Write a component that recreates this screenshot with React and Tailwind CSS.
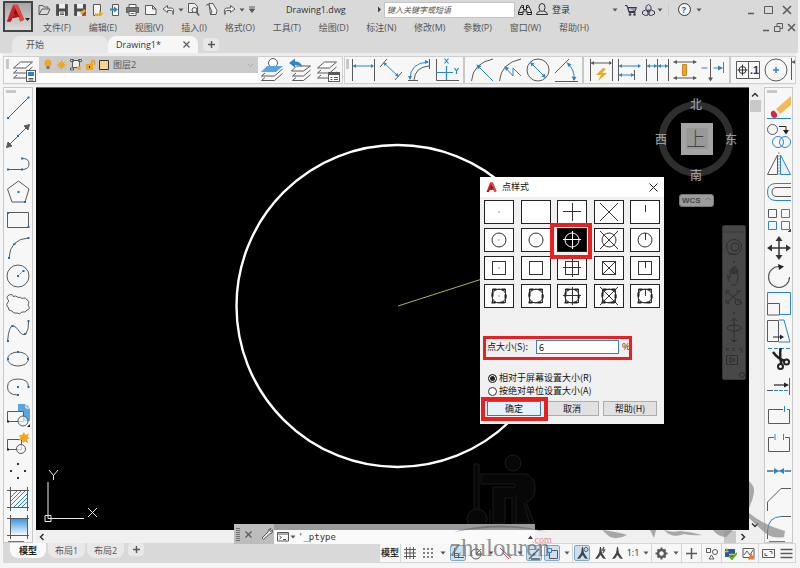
import React from "react";

const G = "#5a5a5a";
const B = "#2a86cb";

function Svg({ w = 24, h = 24, children, className = "" }) {
  return (
    <svg width={w} height={h} viewBox={`0 0 ${w} ${h}`} fill="none" stroke={G} strokeWidth="1" className={`shrink-0 ${className}`} aria-hidden="true">
      {children}
    </svg>
  );
}

function Dot({ x, y, c = "#1f6fb5" }) {
  return <rect x={x - 1} y={y - 1} width="2" height="2" fill={c} stroke="none" />;
}

function Caret({ className = "w-2", label = "展开" }) {
  return (
    <button aria-label={label} className={`flex h-full shrink-0 items-center justify-center ${className}`}>
      <Svg w={6} h={4}><path d="M0.5 0.5h5L3 3.5z" fill="#555" stroke="none" /></Svg>
    </button>
  );
}

function LogoA({ s }) {
  return (
    <svg width={s} height={s} viewBox="0 0 24 24" aria-hidden="true" className="shrink-0">
      <path d="M1 22 9 1h6l8 19-5 2-2-6-8 1-2 5z" fill="#c9262c" />
      <path d="M9 1h6l8 19-5 2L12 6z" fill="#e04a42" />
      <path d="M9.500 13 12 6l3 7z" fill="#7e1216" />
      <path d="M1 22 14 12l4 4-10 2-2 4z" fill="#a8171c" />
    </svg>
  );
}

/* ---------- quick access bar ---------- */
const quick = [
  ["打开", <Svg w={13} h={12}><path d="M1 10.500V1.500h4l1 1.500h4v2M1 10.500 4 5h8l-2.500 5.500z" /></Svg>],
  ["保存", <Svg w={12} h={12}><path d="M0.500 0.500h11v11h-11z" fill="#4b4b4b" /><path d="M3 0h6v4.500H3zM3 7.500h6V12H3z" fill="#eee" stroke="none" /><path d="M4 9h4M4 10.500h4" /></Svg>],
  ["另存为", <Svg w={12} h={12}><path d="M0.500 0.500h11v11h-11z" fill="#4b4b4b" /><path d="M3 0h6v4.500H3zM3 7.500h5V12H3z" fill="#eee" stroke="none" /><path d="m6 9 4-4 2 2-4 4z" fill="#f2a51f" stroke="none" /><path d="M8 12h4V9z" fill="#d9493c" stroke="none" /></Svg>],
  ["导入", <Svg w={12} h={12}><path d="M1.500 0.500h7v11h-7z" fill="#f5f5f5" /><path d="M3 9.500h4V6l4 4-2 2H3z" fill="#f2a51f" stroke="none" /></Svg>],
  ["导出", <Svg w={12} h={12}><path d="M3.500 0.500h6v11h-6z" fill="#f5f5f5" /><path d="M1 5.500h5" stroke={B} strokeWidth="2" /><path d="m5 2.500 4 3-4 3z" fill={B} stroke="none" /></Svg>],
  ["打印", <Svg w={13} h={12}><path d="M3 3.500v-3h7v3" fill="#fff" /><path d="M0.500 3.500h12v5h-12z" fill="#777" /><path d="M3 7.500h7v4H3z" fill="#fff" /><path d="M4.500 9.500h4" stroke={B} /></Svg>],
  ["新建", <Svg w={12} h={12}><path d="M0.500 1.500h7l3.500 3.500v5.500H0.500zM7.500 1.500v3.500H11" fill="#f5f5f5" /></Svg>],
  ["放弃", <Svg w={13} h={12}><path d="M5.500 1.500 1 5l4.500 3.500v-2h4q2 0 1.500 4 2-6.500-2-6.500H5.500z" fill="#f0f0f0" /></Svg>],
];
const quick2 = [
  ["预览", <Svg w={13} h={13}><path d="M1.500 9.500v-9h6l3 3v6z" fill="#eee" /><circle cx="7.500" cy="7" r="2.500" fill="#eee" /><path d="m9.500 9 2.500 3.500" strokeWidth="1.500" /></Svg>],
  ["图纸", <Svg w={13} h={13}><path d="M4 0.500h4l4 7-1 4H5.500z" fill="#f0f0f0" /><path d="M1 2.500 3.500 1 7 9l-1.500 2.500" /></Svg>],
  ["重做", <Svg w={13} h={12}><path d="M7.500 1.500 12 5 7.500 8.500v-2h-4q-2 0-1.500 4-2-6.500 2-6.500h3.500z" fill="#f0f0f0" /></Svg>],
];

const menus = ["文件(F)", "编辑(E)", "视图(V)", "插入(I)", "格式(O)", "工具(T)", "绘图(D)", "标注(N)", "修改(M)", "参数(P)", "窗口(W)", "帮助(H)"];

function Header() {
  return (
    <header className="mr-0.5 bg-[#d9d9d9] text-[9px] text-[#555]">
      <div className="flex h-9">
        <button aria-label="应用程序菜单" className="mt-px ml-[3px] flex h-[31px] w-[30px] shrink-0 items-start border-2 border-[#444] bg-linear-to-b from-[#a5a5a5] to-[#dcdcdc] p-px">
          <LogoA s={19} />
          <Svg w={5} h={24}><path d="M0 14h5l-2.500 3z" fill="#222" stroke="none" /></Svg>
        </button>
        <div className="flex min-w-0 flex-1 flex-col">
          <div className="ml-[3px] flex h-[19px] items-center">
            <div className="grid h-full w-[141px] shrink-0 grid-cols-8">
              {quick.map(([n, i]) => <button key={n} aria-label={n} className="flex items-center justify-center">{i}</button>)}
            </div>
            <Caret />
            <div className="grid h-full w-[53px] shrink-0 grid-cols-3">
              {quick2.map(([n, i]) => <button key={n} aria-label={n} className="flex items-center justify-center">{i}</button>)}
            </div>
            <Caret />
            <button aria-label="自定义" className="flex w-3 shrink-0 justify-center"><Svg w={6} h={7}><path d="M0 1h6M0.500 3h5L3 6.500z" fill="#555" /></Svg></button>
            <h1 className="ml-7 w-[88px] shrink-0 text-[#333]">Drawing1.dwg</h1>
            <Svg w={10} h={7}><path d="M4 0.500v6l3-3z" fill="#444" stroke="none" /></Svg>
            <input aria-label="搜索" placeholder="键入关键字或短语" className="h-4 w-[131px] min-w-0 border border-[#c4c4c4] bg-white px-0.5 text-[8px] italic placeholder:text-[#555]" />
            <button aria-label="查找" className="ml-0.5 flex w-[15px] justify-center">
              <Svg w={14} h={12}><path d="M3.500 1.500h2v4h3v-4h2l3 6.500v2.500h-4.500V7h-4v3.500H0.500V8z" stroke="#222" fill="#ddd" /><path d="M1 8.500h3.500M9.500 8.500H13M3.500 3.500h2M8.500 3.500h2" stroke="#222" /></Svg>
            </button>
            <button className="flex h-full w-[79px] shrink-0 items-center gap-1 pl-1 text-[#333]">
              <Svg w={12} h={13}><ellipse cx="6" cy="4.500" rx="3" ry="4" stroke="#333" /><path d="M4 8q-3.500 1-3.500 3.500h11Q11.500 9 8 8" stroke="#333" /></Svg>
              登录
            </button>
            <Caret />
            <button aria-label="购物车" className="ml-[3px] flex w-[18px] justify-center">
              <Svg w={12} h={12}><path d="M0 1.500h2l2 7h6.500M3 3.500h8.500l-1.500 4H4z" stroke="#37374d" fill="#8f8fa3" /><circle cx="5" cy="10.500" r="1" fill="#333" /><circle cx="9.500" cy="10.500" r="1" fill="#333" /></Svg>
            </button>
            <button aria-label="应用" className="flex w-4 justify-center">
              <Svg w={13} h={12}><path d="m6.500 0.500 2.500 2v3l-2.500 1.500L4 5.500v-3zM3.500 6 6 8v3l-2.500 0.500-3-1.500V7.500zM9.500 6 7 8v3l2.500 0.500 3-1.500V7.500z" stroke="#37374d" /><circle cx="6.500" cy="7" r="1" stroke="#37374d" /></Svg>
            </button>
            <Caret />
            <span className="mx-1 h-3 w-px bg-[#ccc]" />
            <button aria-label="帮助" className="flex w-[22px] justify-center">
              <span className="flex h-[13px] w-[13px] items-center justify-center rounded-full border border-[#333] bg-[#f4f4f4] font-bold text-[#2b62a0]">?</span>
            </button>
            <Caret />
            <div className="mr-0.5 ml-auto flex">
              <button aria-label="最小化" className="flex w-[18px] justify-center"><Svg w={8} h={10}><path d="M1 8.500h6" strokeWidth="1.500" /></Svg></button>
              <button aria-label="最大化" className="flex w-[18px] justify-center"><Svg w={10} h={10}><path d="M0.500 1.500h8v7h-8z" /></Svg></button>
              <button aria-label="关闭" className="flex w-[18px] justify-center"><Svg w={10} h={10}><path d="m1 1 8 8M9 1 1 9" strokeWidth="1.500" /></Svg></button>
            </div>
          </div>
          <nav className="flex h-[17px] items-center pl-[10px]">
            <div className="flex w-[546px] justify-between whitespace-nowrap">
              {menus.map((m) => <button key={m}>{m}</button>)}
            </div>
            <div className="mr-0.5 ml-auto flex gap-1">
              <button aria-label="最小化图形"><Svg w={7} h={9}><path d="M0 7.500h6" strokeWidth="1.500" /></Svg></button>
              <button aria-label="还原图形"><Svg w={9} h={9}><path d="M3 3V0.500h5.500v5H6M0.500 3.500h5.500v5H0.500z" /></Svg></button>
              <button aria-label="关闭图形"><Svg w={9} h={9}><path d="m1 1 7 7M8 1 1 8" strokeWidth="1.500" /></Svg></button>
            </div>
          </nav>
        </div>
      </div>
      <div className="flex h-[17px] items-center pl-3">
        <button className="h-full w-24 rounded-t-lg bg-[#e8e8e8] pl-[14px] text-left">开始</button>
        <div className="flex h-full w-[90px] items-center justify-between rounded-t-lg bg-[#f7f7f7] pr-2 pl-2 text-[#333]">
          <button>Drawing1*</button>
          <button aria-label="关闭标签"><Svg w={7} h={7}><path d="m0.500 0.500 6 6M6.500 0.500l-6 6" strokeWidth="1.200" /></Svg></button>
        </div>
        <button aria-label="新图形" className="ml-[5px] flex h-[13px] w-4 items-center justify-center rounded bg-[#e8e8e8]"><Svg w={7} h={7}><path d="M0 3.500h7M3.500 0v7" strokeWidth="1.500" /></Svg></button>
      </div>
    </header>
  );
}

/* ---------- layer and dimension bar ---------- */
const sheets = <><path d="m1.500 10 7-6h12l-7 6z" fill="#fff" /><path d="m5 12-3.500 3h12l7-6M5 17l-3.500 3h12l7-6" /></>;

const dims1 = [
  ["线性", <Svg><path d="M1.500 1v22M23.500 1v22" /><path d="M2 8h20" stroke={B} /><path d="m2 8 3-2v4zM23 8l-3-2v4z" fill={B} stroke="none" /></Svg>],
  ["对齐", <Svg><path d="m1 9 7-8M16 22l7-8" /><path d="m5 5 14 13" stroke={B} /><path d="m4 4 4 1.500-2.500 2.500zM20 19l-4-1.500 2.500-2.500z" fill={B} stroke="none" /></Svg>],
  ["弧长", <Svg><path d="M1 22.500h10M22.500 1v10M7 22Q8 9 22 8" /><path d="M3 21Q3 5 21 4" stroke={B} /><path d="m3 22-2-4h4zM22 4l-4-2v4z" fill={B} stroke="none" /></Svg>],
  ["坐标", <Svg><path d="M1.500 1v21.500H24" /><path d="M1 14.500h17M11.500 8v14M9.500 0.500l4 5M13.500 0.500l-4 5M19.500 10l2 3 2-3M21.500 13v3" stroke={B} strokeWidth="1.200" /></Svg>],
];
const dims2 = [
  ["半径", <Svg><path d="M1.500 23Q3 5 23 1" /><path d="m8 8 15 15" stroke={B} /><path d="m6.500 6.500 5 1.500-3.500 3.500z" fill={B} stroke="none" /></Svg>],
  ["折弯", <Svg><path d="M1.500 23Q3 5 23 1" /><path d="m7 9 8 9v-8l8 8" stroke={B} /><path d="m6.500 8 4.500 2-3 3z" fill={B} stroke="none" /></Svg>],
  ["直径", <Svg><circle cx="12" cy="12" r="11" /><path d="m5 5 14 14" stroke={B} /><path d="m4 4 4.500 1.500-3 3zM20 20l-4.500-1.500 3-3z" fill={B} stroke="none" /></Svg>],
  ["角度", <Svg><path d="M1 15 15 1M1 23.500h23" /><path d="M14 6q7 6 6 16" stroke={B} /><path d="m12.500 4 5 2.500-3 2.500zM20 23l-2.500-4.500 5 0.500z" fill={B} stroke="none" /></Svg>],
];
const dims3 = [
  ["快速标注", <Svg><path d="M1.500 1v22M23.500 1v22M2 5h20" /><path d="m2 5 3-2v4zM23 5l-3-2v4z" fill={G} stroke="none" /><path d="m14 10-7 7h5l-3 6 9-8h-5l4-4z" fill="#f2a51f" stroke="none" /></Svg>],
  ["基线", <Svg><path d="M1.500 1v22M17.500 12v10" /><path d="M2 8h20M2 17h15" stroke={B} /><path d="m2 8 3-2v4zM24 8l-3-2v4zM2 17l3-2v4zM17 17l-3-2v4z" fill={B} stroke="none" /></Svg>],
  ["连续", <Svg><path d="M1.500 1v22M12.500 1v22M23.500 1v22" /><path d="M2 8h21" stroke={B} /><path d="m2 8 3-2v4zM12 8 9 6v4zM13 8l3-2v4zM23 8l-3-2v4z" fill={B} stroke="none" /></Svg>],
  ["等距标注", <Svg><path d="M1 4h22M1 20h22" /><path d="m0 4 4-2v4zM24 4l-4-2v4zM0 20l4-2v4zM24 20l-4-2v4z" fill={G} stroke="none" /><path d="M9.500 6.500h4v11h-4z" fill="#f2a51f" stroke="#c9891c" /></Svg>],
  ["折断", <Svg><path d="M9.500 1v20" /><path d="M0.500 10h6M12.500 10h8" stroke={B} strokeWidth="1.200" /><path d="m22 10-5-2.500v5zM22.500 4" fill={B} stroke="none" /><path d="M22.500 4v11" stroke={B} /><path d="m9.500 23.500-2.500-4h5z" fill={G} stroke="none" /></Svg>],
];
const dims4 = [
  ["公差", <Svg><path d="M0.500 3.500h23v17h-23zM12.500 3.500v17" /><circle cx="6.500" cy="12" r="3.500" stroke="#333" /><path d="M1.500 12h10M6.500 6.500v11" stroke="#333" /><text x="14" y="16" fontSize="11" fontWeight="bold" fill="#333" stroke="none" fontFamily="Liberation Sans">.1</text></Svg>],
  ["圆心标记", <Svg><circle cx="12" cy="12" r="11" /><path d="M9 12h6M12 9v6" stroke={B} strokeWidth="1.500" /></Svg>],
];

function Tool({ item, className = "w-7" }) {
  return <button aria-label={item[0]} className={`flex shrink-0 items-center justify-center ${className}`}>{item[1]}</button>;
}
const Sep = () => <span className="mr-[3px] ml-0.5 w-0.5 shrink-0 bg-[#c8c8c8]" />;
const Grip = () => <span className="mt-0.5 h-2.5 w-[3px] shrink-0 bg-[#c8c8c8]" />;

function RibbonBar() {
  return (
    <div className="mr-1 ml-[3px] flex h-8 shrink-0 overflow-hidden border-t-[3px] border-b border-[#ececec] bg-[#f7f7f7]">
      <div className="flex shrink-0 border border-[#cfcfcf] pl-0.5">
        <Grip />
        <Tool className="w-[30px]" item={["图层特性", <Svg>{sheets}<rect x="14.500" y="12.500" width="9" height="11" fill="#fff" /><path d="M16 14h6v4h-6z" fill={B} stroke="none" /><path d="M16.500 20.500h5M16.500 22h5" /></Svg>]} />
        <div className="w-[219px] bg-white">
          <button className="flex h-4 w-full items-center gap-[3px] bg-[#cbcbcb] px-1 text-[9px] text-[#555]">
            <Svg w={10} h={12}><circle cx="5" cy="4" r="3.500" fill="#f2a51f" stroke="none" /><path d="M3.500 7h3v3h-3z" fill="#777" stroke="none" /></Svg>
            <Svg w={11} h={12}><circle cx="5.500" cy="6" r="3" fill="#f2a51f" stroke="none" /><path d="M5.500 1v10M0.500 6h10M2 2.500l7 7M9 2.500l-7 7" stroke="#f2a51f" /></Svg>
            <Svg w={12} h={12}><path d="M2.500 1.500h7v7h-7zM0.500 0.500h3v2h-3zM8.500 0.500h3v2h-3zM0.500 9h3v2h-3z" fill="#eee" /><circle cx="9" cy="9" r="2" fill="#f2a51f" stroke="none" /></Svg>
            <Svg w={11} h={12}><path d="M6.500 5V2.500q1.500-2 3 0V6" stroke="#e89b1c" strokeWidth="1.500" /><path d="M1 5h7v6H1z" fill="#f2a51f" stroke="none" /><path d="M4.500 7v2" stroke="#333" /></Svg>
            <Svg w={11} h={12}><path d="M0.500 1.500h9v9h-9z" fill="#f6d48a" stroke="#333" /></Svg>
            <span className="flex-1 text-left">图层2</span>
            <Svg w={7} h={5}><path d="m1 1 2.500 2.500L6 1" stroke="#aaa" /></Svg>
          </button>
        </div>
        <Tool item={["置为当前", <Svg><circle cx="13" cy="5" r="4.500" fill="#fff" /><path d="m1 14 6-6h16l-7 6z" fill="#5ba6e0" stroke="none" /><path d="m5 15-3.500 3h13l8-7M5 19.500l-3.500 3h13l8-7" /></Svg>]} />
        <Tool item={["上一图层", <Svg><path d="m4.500 12 4-4h14l-7 5h-12zM8 15l-3.500 3h11l7-6M8 19.500l-3.500 3h11l7-6" /><path d="M1 5 7 0.500v3q6 0 7 5-3-2-7-1.500V9.500z" fill={B} stroke="none" /></Svg>]} />
        <Tool item={["图层状态", <Svg>{sheets}<rect x="12.500" y="14.500" width="11" height="9" fill="#fff" /><path d="M13 16h10" strokeWidth="2" /><path d="M14.500 19.500h2M18 19.500h4M14.500 21.500h2M18 21.500h4" /></Svg>]} />
      </div>
      <div className="ml-px flex min-w-0 flex-1 overflow-hidden border border-[#cfcfcf] pl-px">
        <Grip />
        {dims1.map((d) => <Tool key={d[0]} item={d} />)}
        <Sep />
        {dims2.map((d) => <Tool key={d[0]} item={d} />)}
        <Sep />
        {dims3.map((d) => <Tool key={d[0]} item={d} />)}
        <Sep />
        {dims4.map((d) => <Tool key={d[0]} item={d} />)}
        <Svg w={8}><path d="M1.500 1v22M2 5h6" /><path d="m2 5 3-2v4z" fill={G} stroke="none" /></Svg>
      </div>
    </div>
  );
}

/* ---------- side bars ---------- */
const drawTools = [
  ["直线", <Svg><path d="M2 22 23 1" /><Dot x={2} y={22} /><Dot x={22.500} y={1.500} /></Svg>],
  ["构造线", <Svg><path d="M3 21 21 3" /><path d="m0.500 23.500 1.500-5.500 4 4zM23.500 0.500l-5.500 1.500 4 4z" fill={G} /><Dot x={12} y={12} /></Svg>],
  ["多段线", <Svg><path d="M2 17.500h14q7 0 7-5.500t-6-5.500" /><Dot x={2} y={17.500} /><Dot x={16} y={17.500} /><Dot x={16} y={6.500} /></Svg>],
  ["多边形", <Svg><path d="m12.500 1 10.500 8-4 13H6L1.500 9z" /><Dot x={12.500} y={12} /><Dot x={19} y={22} /></Svg>],
  ["矩形", <Svg><path d="M1.500 4.500h21v15h-21z" /><Dot x={2} y={5} /><Dot x={22.500} y={19} /></Svg>],
  ["圆弧", <Svg><path d="M3 22Q4 3 22.500 2" /><Dot x={3} y={22} /><Dot x={8.500} y={8} /><Dot x={22.500} y={2} /></Svg>],
  ["圆", <Svg><circle cx="12" cy="12" r="11" /><path d="m12 12 5-5" stroke={B} strokeDasharray="2 1" /><Dot x={12} y={12} /><Dot x={17.500} y={7} /></Svg>],
  ["修订云线", <Svg><path d="M3 9q-4-4 0-6 4-1.500 4 1.500 3-1.500 5 1 3-1 4 1 4-1.500 5 1.500 3 1 1 5 3 4-1 5-1 3-5 2-2 3-5 1-4 1-5-2-4 0-4-4-3-2 1-6z" /></Svg>],
  ["样条曲线", <Svg><path d="M1.500 22.500Q3 6 7 7q3 0 6 5t7 3q3-5 2.500-13" /><Dot x={2} y={22} /><Dot x={6.500} y={7} /><Dot x={19} y={15} /><Dot x={22.500} y={2} /></Svg>],
  ["椭圆", <Svg><ellipse cx="12" cy="12" rx="10.500" ry="7" /><Dot x={12} y={5} /><Dot x={2} y={12} /><Dot x={22} y={12} /></Svg>],
  ["椭圆弧", <Svg><path d="M12 20Q1.500 20 1.500 12T12 4t10.500 8" /><Dot x={12} y={20} /><Dot x={12} y={12} /><Dot x={22.500} y={12} /></Svg>],
  ["插入块", <Svg><path d="M12 1h8l4 4v13H12z" fill="#5ba6e0" stroke="none" /><path d="M20 1v4h4" stroke="#fff" /><path d="M1.500 8.500h16v10h-16z" fill="#f7f7f7" /><circle cx="17" cy="18" r="5" fill="#f7f7f7" fillOpacity="0.700" /><path d="M24 21v3h-3z" fill="#222" stroke="none" /><Dot x={2} y={18.500} c="#222" /></Svg>],
  ["创建块", <Svg><path d="M1.500 8.500h14v10h-14z" /><circle cx="15" cy="18" r="4.500" fill="#f7f7f7" fillOpacity="0.700" /><path d="m18 1 1.500 3 3.500-1.500L21.500 6l2.500 1-3 1.500 1 3.500-3-1.500L17 12l-1-3-3.500 0.500 2-3-2-2 3.500-0.500z" fill="#f2a51f" stroke="none" /><Dot x={2} y={18.500} c="#222" /></Svg>],
  ["点", <Svg><Dot x={12} y={5} c="#333" /><Dot x={5} y={12} c="#333" /><Dot x={19} y={12} c="#333" /><Dot x={12} y={19} c="#333" /></Svg>],
  ["图案填充", <Svg><path d="m5 10 6-6M5 14 15 4M5 18 19 4M8 20 21 7M12 20l9-9M16 20l5-5" stroke={B} /><path d="M1 3.500h22M1 20.500h22M4.500 0v24M21.500 0v24" /></Svg>],
  ["渐变色", <Svg><defs><linearGradient id="fade" x1="0" y1="0" x2="0" y2="1"><stop offset="0" stopColor="#3d98e0" /><stop offset="1" stopColor="#f4f9ff" /></linearGradient></defs><path d="M5 4h16v16H5z" fill="url(#fade)" stroke="none" /><path d="M1 3.500h22M1 20.500h22M4.500 0v24M21.500 0v24" /></Svg>],
];

const editTools = [
  ["删除", <Svg><path d="M24 0v9L13 18l-4-5z" fill="#f3bb55" stroke="none" /><path d="m9 13 4 5-1.500 1-4-5z" fill="#eee" stroke="none" /><path d="M4 16q3-4 6 2 1 4-3 4-4-1-3-6z" fill="#dc2540" stroke="none" /><path d="M0 22.500h24" stroke={B} /></Svg>],
  ["复制", <Svg><circle cx="5.500" cy="5.500" r="5" /><circle cx="11" cy="18" r="5.500" stroke={B} /><circle cx="18" cy="18" r="5.500" stroke={B} /><path d="M12 2.500h7V7" stroke="#222" /><path d="M16 6h6l-3 4.500z" fill="#222" stroke="none" /></Svg>],
  ["镜像", <Svg><path d="M0.500 22.500 10.500 3v19.500z" /><path d="M13.500 3v19.500h10z" stroke={B} fill="#e4f0fa" /><path d="M12 0v24" strokeDasharray="2 1" stroke="#999" /></Svg>],
  ["偏移", <Svg><path d="M24 3.500H9q-8.500 0-8.500 8.500T9 20.500h15" stroke={B} /><path d="M24 7.500H10q-5 0-5 4.500t5 4.500h14" /></Svg>],
  ["阵列", <Svg><path d="M1.500 1.500h8v8h-8z" /><path d="M14.500 1.500h8v8h-8zM1.500 13.500h8v8h-8zM14.500 13.500h8v8h-8z" stroke={B} /><path d="M24 21v3h-3z" fill="#222" /></Svg>],
  ["移动", <Svg><path d="M12 4v16M4 12h16" stroke="#333" strokeWidth="1.500" /><path d="m12 0 3.500 5h-7zM12 24l3.500-5h-7zM0 12l5-3.500v7zM24 12l-5-3.500v7z" fill="#333" stroke="none" /></Svg>],
  ["旋转", <Svg><path d="M12 2.500A10.500 10.500 0 1 0 22.500 13" strokeWidth="1.200" /><path d="m11 0 6 2.500-5 3.500z" fill="#222" stroke="none" /></Svg>],
  ["缩放", <Svg><path d="M0.500 0.500h23v22h-23z" stroke={B} /><path d="M0.500 11.500h12v11.500h-12z" fill="#f7f7f7" /></Svg>],
  ["拉伸", <Svg><path d="M12 1h5l6 22H12" stroke={B} /><path d="M0.500 1.500h11v21H0.500z" /><path d="M6 18h8" stroke="#222" /><path d="m17 18-4-2.500v5z" fill="#222" stroke="none" /></Svg>],
  ["修剪", <Svg><path d="M1 1.500h22" stroke={B} strokeDasharray="4 2" /><path d="M6 5q5 7 12 9M13.500 1q-1 10 1 16" stroke="#222" strokeWidth="2.500" /><circle cx="19.500" cy="15" r="2.500" stroke="#222" strokeWidth="2" /><circle cx="13.500" cy="19.500" r="2.500" stroke="#222" strokeWidth="2" /></Svg>],
  ["延伸", <Svg><path d="M22.500 3v17" /><path d="M7 10h12" stroke="#222" strokeWidth="1.200" /><path d="m22 10-5-2.500v5z" fill="#222" stroke="none" /><path d="M0 15.500h6" /><path d="M7 15.500h15" stroke={B} strokeDasharray="4 1" /></Svg>],
  ["打断于点", <Svg><path d="M16 6.500H1.500v14h21v-14H20" /><path d="M17.500 3v6" stroke={B} /></Svg>],
  ["打断", <Svg><path d="M7 6.500H1.500v14h21v-14H18" /><path d="M8 3v6M16.500 3v6" stroke={B} /></Svg>],
  ["合并", <Svg><path d="M0 12h24" stroke={B} /><path d="M0 12h6M18 12h6" /><path d="m12 12-5-3v6zM12 12l5-3v6z" fill={B} stroke="none" /></Svg>],
  ["倒角", <Svg><path d="M0.500 24v-9L14 1.500h10" /></Svg>],
  ["圆角", <Svg><path d="M14 1.500h10M0.500 24V15" /><path d="M0.500 16Q1 2 14 1.500" stroke={B} /></Svg>],
];

function SideBar({ tools, className }) {
  return (
    <div className={`flex shrink-0 flex-col border border-[#c8c8c8] bg-[#f7f7f7] ${className}`}>
      <span className="mt-0.5 ml-0.5 h-[3px] w-2.5 shrink-0 bg-[#c8c8c8]" />
      <div className="mt-px flex min-h-0 flex-1 flex-col">
        {tools.map((t) => (
          <button key={t[0]} aria-label={t[0]} className="flex min-h-0 flex-1 items-center justify-center">{t[1]}</button>
        ))}
      </div>
      <span className="ml-1 h-px w-4 bg-[#777]" />
    </div>
  );
}

/* ---------- point style dialog ---------- */
function PointMark({ row, col, dark }) {
  const c = dark ? "#fff" : "#333";
  return (
    <svg width="28" height="22" viewBox="0 0 28 22" fill="none" stroke={c} strokeWidth="1" aria-hidden="true">
      {(row === 1 || row === 3) && <circle cx="14" cy="11" r="7" />}
      {row >= 2 && <rect x="7.500" y="4.500" width="13" height="13" strokeWidth="1" />}
      {row === 3 && <rect x="7.500" y="4.500" width="13" height="13" strokeDasharray="4 5" strokeWidth="2" stroke="#222" />}
      {col === 0 && <rect x="13.500" y="10.500" width="1" height="1" fill={c} stroke="none" />}
      {col === 2 && <path d="M5 10.500h18M14.500 2v18" />}
      {col === 3 && <path d={row === 2 ? "M7 4l14 14M21 4 7 18" : "M5 2l18 18M23 2 5 20"} />}
      {col === 4 && <path d="M14.500 4v7" />}
    </svg>
  );
}

function PointDialog() {
  const btn = "h-[15px] w-[54px] border border-[#adadad] bg-[#e1e1e1]";
  return (
    <section role="dialog" aria-label="点样式" className="absolute top-[89px] left-[444px] flex h-[247px] w-[184px] flex-col bg-[#f0f0f0] font-['Noto_Sans_CJK_SC',sans-serif] text-[9px] leading-3 text-[#111]">
      <div className="flex h-5 items-center gap-[5px] bg-white px-[6px]">
        <LogoA s={11} />
        <h2 className="flex-1">点样式</h2>
        <button aria-label="关闭"><Svg w={9} h={9}><path d="m0.500 0.500 8 8M8.500 0.500l-8 8" stroke="#222" /></Svg></button>
      </div>
      <div className="mt-[3px] flex flex-col gap-1 px-1">
        {[0, 1, 2, 3].map((r) => (
          <div key={r} className="flex justify-between">
            {[0, 1, 2, 3, 4].map((c) => {
              const on = r === 1 && c === 2;
              return (
                <button key={c} aria-label={`样式 ${r * 5 + c + 1}`} className={`flex h-6 w-[30px] items-center justify-center border border-[#222] ${on ? "bg-black" : "bg-white"}`}>
                  <PointMark row={r} col={c} dark={on} />
                </button>
              );
            })}
          </div>
        ))}
      </div>
      <div className="mt-8 flex items-center px-[7px]">
        <label htmlFor="psize" className="w-[49px]">点大小(S):</label>
        <input id="psize" defaultValue="6" className="h-[14px] w-[83px] border border-[#3f7fc0] bg-white px-0.5" />
        <span className="ml-[3px]">%</span>
      </div>
      <div className="mt-[18px] flex flex-col gap-px pl-2">
        {["相对于屏幕设置大小(R)", "按绝对单位设置大小(A)"].map((t, i) => (
          <label key={t} className="flex items-center gap-0.5">
            <input type="radio" name="mode" defaultChecked={i === 0} className="h-[9px] w-[9px] appearance-none rounded-full border border-[#333] bg-white checked:bg-[#222] checked:shadow-[inset_0_0_0_1px_#fff]" />
            {t}
          </label>
        ))}
      </div>
      <div className="mt-1 flex gap-1 px-[7px]">
        <button className="h-[15px] w-[54px] border border-[#2a7fc9] bg-[#e5f1fb]">确定</button>
        <button className={btn}>取消</button>
        <button className={btn}>帮助(H)</button>
      </div>
      <span className="pointer-events-none absolute top-[46px] left-[70px] h-9 w-[42px] border-4 border-[#ea2020]" />
      <span className="pointer-events-none absolute top-[159px] left-[3px] h-6 w-[149px] border-[3px] border-[#ea2020]" />
      <span className="pointer-events-none absolute top-[220px] left-px h-6 w-[67px] border-4 border-[#ea2020]" />
    </section>
  );
}

/* ---------- drawing area ---------- */
function Canvas() {
  return (
    <div className="relative min-h-0 flex-1 bg-black font-['Noto_Sans_CJK_SC',sans-serif]">
      <svg width="713" height="442" viewBox="36 88 713 442" fill="none" className="absolute top-0 left-0" aria-hidden="true">
        <circle cx="397.500" cy="306" r="161" stroke="#fff" strokeWidth="2.400" />
        <path d="M398 306 482 279" stroke="#b3b04a" />
        <path d="M48 482v36.500h36M45 515.500h6v6h-6z" stroke="#e8e8e8" />
        <path d="m49 470 4.500 5.500 4.500-5.500M53.500 475v5M88 508l9 9M97 508l-9 9" stroke="#e8e8e8" />
        {/* view cube */}
        <circle cx="696" cy="139" r="34" stroke="#2e2e2e" strokeWidth="7" />
        <rect x="681" y="123" width="32" height="32" fill="#a4a4a4" />
        <rect x="686" y="128" width="22" height="21" fill="#989898" />
        <g fontSize="12" textAnchor="middle" fill="#9a9a9a" fontWeight="500" fontFamily="Noto Sans CJK SC, sans-serif">
          <text x="696" y="109">北</text>
          <text x="661" y="144">西</text>
          <text x="731" y="144">东</text>
          <text x="696" y="180">南</text>
          <text x="696" y="146" fontSize="19" fill="#444" fontWeight="300">上</text>
        </g>
        <rect x="679.500" y="194.500" width="34" height="12" rx="2.500" fill="#9c9c9c" stroke="#777" />
        <text x="682" y="203" fontSize="8" fill="#4a4a4a" fontWeight="bold" fontFamily="Liberation Sans, sans-serif">WCS</text>
        <path d="m705 200 3-2 3 2" stroke="#777" />
        {/* navigation bar */}
        <rect x="722.500" y="225.500" width="23" height="154" rx="1.500" fill="#484848" stroke="#363636" />
        <path d="M723 232h23" stroke="#363636" />
        <g stroke="#2e2e2e">
          <circle cx="734" cy="247" r="7.500" /><circle cx="735" cy="247" r="4" /><path d="M728 254h8" />
          <path d="M730 282q-3-5-3-7l3 3v-8q2-1 2 0v4-6q2-1 2 0v6-7q2-1 2 0v7l1-4q2 0 1 2v5q0 6-3 8h-4" />
          <path d="m726 291 16 13M726 303l14-12M726 295v-4h4M726 299v4h4M736 291h5" /><circle cx="738" cy="302" r="3" />
          <path d="M734 318v24M731 321l3-3 3 3M731 339l3 3 3-3" /><ellipse cx="734" cy="328" rx="7" ry="3" />
          <path d="M726.500 355.500h11v9h-11zM730 357.500v5l5-2.500zM726 348l3 3M729 348l-3 3M732 348l3 3M735 348l-3 3M739 349h3v4" /><circle cx="742" cy="375" r="2.500" />
        </g>
        <path d="M733 262h2M733 313h2M733 341h2" stroke="#222" />
        {/* studio mark */}
        <g stroke="#1d1b18" fill="#070707">
          <circle cx="513" cy="463" r="8" />
          <path d="M474 464h5v47h-5zM481 474h45q10 4 9 16-1 10-9 12l8 21h-22v-25h-7v25h-12v-36h22v-3h-34z" />
          <circle cx="477" cy="519" r="10" /><path d="M490 510v14M516 495v30M524 503l6 22" />
        </g>
      </svg>

      <div className="absolute top-[436px] left-[198px] z-10 flex h-5 w-[301px] flex-col">
        <div className="h-[6px] bg-[#9a9a9a]" />
        <div className="-mt-[6px] flex h-5 items-center text-[10px] text-[#333]">
          <div className="flex h-full w-10 items-center gap-[5px] bg-[#bdbdbd] px-0.5">
            <Svg w={4} h={13}><path d="M1 0v13M3 0v13" strokeDasharray="1 1" strokeWidth="1.500" /></Svg>
            <button aria-label="关闭命令行"><Svg w={7} h={7}><path d="m0.500 0.500 6 6M6.500 0.500l-6 6" strokeWidth="1.200" /></Svg></button>
            <button aria-label="自定义命令行" className="ml-1"><Svg w={12} h={12}><path d="m1 10 6-6q-0.500-3 3-3.500L8.500 2.500l1 1 2-1.500q0.500 4-3 4l-6 5.500z" fill="#e8e8e8" /></Svg></button>
          </div>
          <div className="mt-[6px] flex h-[14px] flex-1 items-center bg-[#fafafa] pl-[3px]">
            <Svg w={12} h={10}><path d="M0.500 0.500h11v8.500H0.500zM0.500 2h11M2.500 4l2 1.500-2 1.500M6 7.500h3" /></Svg>
            <Caret />
            <input aria-label="命令" defaultValue="'_ptype" className="h-[14px] min-w-0 flex-1 bg-transparent px-px font-['DejaVu_Sans_Mono',monospace] text-[9px]" />
            <Svg w={9} h={5}><path d="M2 4h5L4.500 0.500z" fill="#444" stroke="none" /></Svg>
          </div>
        </div>
      </div>
      <PointDialog />
    </div>
  );
}

/* ---------- status bar ---------- */
const on = "mx-px rounded-xs border border-[#7fa8cc] bg-[#cbe1f3] w-4";
const annot = <path d="M7 1h1l1 6 4 6-3-0.500L7.500 9 5 12.500 2 13l4-6z" fill="#444" stroke="none" />;

function StatusBar() {
  const st = (label, cls, icon) => <button aria-label={label} className={`flex h-4 shrink-0 items-center justify-center ${cls}`}>{icon}</button>;
  const group = "flex h-full items-center border-r border-[#d5d5d5]";
  return (
    <footer className="mr-1 ml-[3px] flex h-5 shrink-0 bg-[#d9d9d9] text-[9px] text-[#555]">
      <div className="flex h-[15px] pl-[7px]">
        <button className="w-9 rounded-b-lg bg-[#fafafa] font-bold text-[#222]">模型</button>
        <button className="ml-0.5 w-[37px] rounded-b-lg bg-[#e8e8e8]">布局1</button>
        <button className="ml-0.5 w-[37px] rounded-b-lg bg-[#e8e8e8]">布局2</button>
        <button aria-label="新布局" className="ml-1 flex h-[13px] w-4 items-center justify-center rounded bg-[#e8e8e8]"><Svg w={7} h={7}><path d="M0 3.500h7M3.500 0v7" strokeWidth="1.500" /></Svg></button>
      </div>
      <div className="ml-auto flex shrink-0 items-center border border-[#d5d5d5] bg-[#f7f7f7]">
        <div className={group}><button className="w-[20px] font-bold whitespace-nowrap text-[#333]">模型</button></div>
        <div className={group}>
          {st("栅格", "w-[18px]", <Svg w={12} h={12}><path d="M0 2.500h12M0 6h12M0 9.500h12M2.500 0v12M6 0v12M9.500 0v12" /></Svg>)}
          {st("捕捉", "w-[18px]", <Svg w={12} h={12}><path d="M1 2h10M1 6h10M1 10h10" strokeDasharray="2 2" strokeWidth="1.500" /></Svg>)}
          <Caret className="w-3" />
          {st("正交", on, <Svg w={13} h={13}><path d="M2.500 1v9.500H12M2.500 6.500h4v4" /></Svg>)}
          {st("极轴", "w-[18px]", <Svg w={13} h={13}><circle cx="6" cy="7" r="5" /><path d="M6 7h6M6 7l5-5" /></Svg>)}
          <Caret className="w-[11px]" />
          {st("等轴测", "w-[18px]", <Svg w={13} h={13}><path d="m1 1 11 10" /><path d="m4 6 6 6" stroke="#d4504c" /></Svg>)}
          <Caret className="w-[11px]" />
          {st("对象追踪", on, <Svg w={13} h={13}><path d="M1 12 11 2M3 12h9" strokeWidth="1.300" /><Dot x={6} y={7} /></Svg>)}
          {st("对象捕捉", on, <Svg w={13} h={13}><path d="M3.500 3.500h8v8h-8z" /><path d="M1.500 1.500h4v4h-4z" stroke={B} fill="#cbe1f3" /></Svg>)}
          <Caret className="w-[11px]" />
        </div>
        <div className={group}>
          {st("注释可见性", on, <Svg w={14} h={14}>{annot}<circle cx="11" cy="3.500" r="2" /></Svg>)}
          {st("自动缩放", "w-[17px]", <Svg w={14} h={14}>{annot}<path d="m11 1-1.500 3h2L10 7" strokeWidth="1.500" /></Svg>)}
          {st("注释", "w-[17px]", <Svg w={14} h={14}>{annot}</Svg>)}
          <button className="w-4 text-[#222]">1:1</button>
          <Caret className="w-[10px]" />
        </div>
        <div className={group}>
          {st("切换工作空间", "w-[18px]", <Svg w={13} h={13}><circle cx="6.500" cy="6.500" r="3.500" strokeWidth="2.500" /><path d="M6.500 0.500v3M6.500 9.500v3M0.500 6.500h3M9.500 6.500h3M2.500 2.500l2 2M8.500 8.500l2 2M10.500 2.500l-2 2M4.500 8.500l-2 2" strokeWidth="2" /></Svg>)}
          <Caret className="w-[11px]" />
        </div>
        <div className={group}>{st("注释监视器", "w-[19px]", <Svg w={13} h={13}><path d="M6.500 1v11M1 6.500h11" strokeWidth="1.500" /></Svg>)}</div>
        <div className={group}>{st("隔离对象", "w-[19px]", <Svg w={13} h={13}><path d="M1.500 1.500h4v4h-4zM4 12l2.500-4L9 12z" /><circle cx="10" cy="5" r="2.500" /></Svg>)}</div>
        <div className={group}>
          {st("硬件加速", "w-[17px]", <Svg w={13} h={13}><path d="M1 2h10v8H1z" fill="#2458a6" stroke="none" /><path d="M0.500 4.500h4M5 7.500h6M3 1v2" stroke="#f2c14a" strokeWidth="1.500" /><path d="m5 9 3 3 5-6" stroke="#5cb531" strokeWidth="2" /></Svg>)}
          {st("性能", "w-[19px]", <Svg w={13} h={13}><path d="M1 1.500h11v9H1z" /><path d="m2 8 3-4 3 4 3-5" /><path d="m9 6 4 6.500H6z" fill="#ee7a30" stroke="none" /></Svg>)}
        </div>
        {st("全屏显示", "w-[19px]", <Svg w={13} h={13}><path d="M0.500 2.500h12v8H0.500z" /><path d="M7.500 4.500H10V7M5.500 8.500H3V6" /></Svg>)}
        {st("自定义状态栏", "w-[17px]", <Svg w={13} h={13}><path d="M0.500 2.500h12M0.500 6.500h12M0.500 10.500h12" strokeWidth="1.300" /></Svg>)}
      </div>
    </footer>
  );
}

function Watermark() {
  return (
    <svg width="800" height="568" viewBox="0 0 800 568" className="pointer-events-none absolute top-0 left-0 z-20" aria-hidden="true">
      <text x="450" y="556" fontSize="25" fill="#666" fillOpacity="0.700" fontFamily="Liberation Serif, serif">zhulouren</text>
      <text x="532" y="543" fontSize="10" fill="#e05c6a" fillOpacity="0.700" fontFamily="Liberation Serif, serif">.com</text>
      <path d="M454 532q42-13 94 0-46-9-94 0z" fill="#666" fillOpacity="0.700" />
      <g fill="#888" fillOpacity="0.700">
        <path d="M749 481q6 6 5 11-1 8-5 16z" />
        <path d="M749 513q16 13 36 18l-1 6q-11 2-19-4-8-7-16-15z" />
        <path d="M602 530q16 2 25 5-9 5-17 2zM650 530h6l-2 8zM664 530q8 3 16 1 12 1 22 4-10 1-18-1-12 5-20-4zM713 530h20l-7 7q-8 0-13-7z" />
      </g>
    </svg>
  );
}

export default function App() {
  return (
    <div className="relative flex h-screen min-h-[480px] flex-col overflow-hidden bg-[#f5f5f5] pb-[5px] font-['Open_Sans','Noto_Sans_CJK_SC',sans-serif]">
      <Header />
      <RibbonBar />
      <main className="flex min-h-0 flex-1 pr-[7px] pl-[3px]">
        <SideBar tools={drawTools} className="mt-0.5 w-[30px]" />
        <div className="ml-[3px] flex min-w-0 flex-1 flex-col bg-[#f0f0f0] pt-0.5">
          <div className="h-px bg-[#666]" />
          <Canvas />
          <div className="flex h-[13px] shrink-0 items-center justify-between px-[3px]">
            <button aria-label="向左"><Svg w={6} h={8}><path d="M4.500 1 1.500 4l3 3" stroke="#333" strokeWidth="1.500" /></Svg></button>
            <span className="flex items-center gap-1">
              <span className="h-3 w-3 bg-[#c9c9c9]" />
              <button aria-label="向右"><Svg w={6} h={8}><path d="m1.500 1 3 3-3 3" stroke="#333" strokeWidth="1.500" /></Svg></button>
            </span>
          </div>
        </div>
        <div className="flex w-[15px] shrink-0 flex-col items-center bg-[#f0f0f0] pt-[7px] pr-[3px] pb-[15px]">
          <button aria-label="向上" className="mb-0.5"><Svg w={8} h={6}><path d="M1 4.500 4 1.500l3 3" stroke="#333" strokeWidth="1.500" /></Svg></button>
          <span className="h-3 w-[11px] bg-[#c9c9c9]" />
          <button aria-label="向下" className="mt-auto"><Svg w={8} h={6}><path d="m1 1.500 3 3 3-3" stroke="#333" strokeWidth="1.500" /></Svg></button>
        </div>
        <SideBar tools={editTools} className="mt-0.5 w-[29px]" />
      </main>
      <StatusBar />
      <Watermark />
    </div>
  );
}
